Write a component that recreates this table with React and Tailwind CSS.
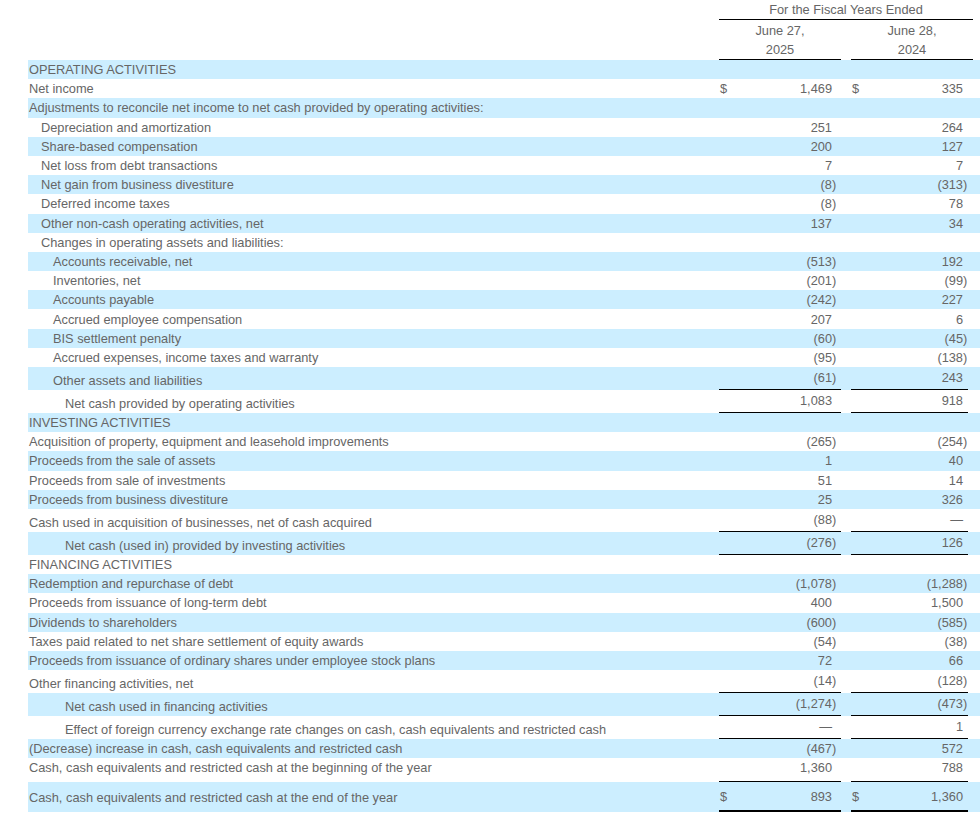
import React from 'react'

// Cash flow statement rows
// indent: 0..3, tall: row carries an underline under the figures
const ROWS = [
  { label: 'OPERATING ACTIVITIES' },
  { label: 'Net income', a: '1,469', b: '335', dollar: true },
  { label: 'Adjustments to reconcile net income to net cash provided by operating activities:' },
  { label: 'Depreciation and amortization', indent: 1, a: '251', b: '264' },
  { label: 'Share-based compensation', indent: 1, a: '200', b: '127' },
  { label: 'Net loss from debt transactions', indent: 1, a: '7', b: '7' },
  { label: 'Net gain from business divestiture', indent: 1, a: '(8)', b: '(313)' },
  { label: 'Deferred income taxes', indent: 1, a: '(8)', b: '78' },
  { label: 'Other non-cash operating activities, net', indent: 1, a: '137', b: '34' },
  { label: 'Changes in operating assets and liabilities:', indent: 1 },
  { label: 'Accounts receivable, net', indent: 2, a: '(513)', b: '192' },
  { label: 'Inventories, net', indent: 2, a: '(201)', b: '(99)' },
  { label: 'Accounts payable', indent: 2, a: '(242)', b: '227' },
  { label: 'Accrued employee compensation', indent: 2, a: '207', b: '6' },
  { label: 'BIS settlement penalty', indent: 2, a: '(60)', b: '(45)' },
  { label: 'Accrued expenses, income taxes and warranty', indent: 2, a: '(95)', b: '(138)' },
  { label: 'Other assets and liabilities', indent: 2, a: '(61)', b: '243', tall: true },
  { label: 'Net cash provided by operating activities', indent: 3, a: '1,083', b: '918', tall: true },
  { label: 'INVESTING ACTIVITIES' },
  { label: 'Acquisition of property, equipment and leasehold improvements', a: '(265)', b: '(254)' },
  { label: 'Proceeds from the sale of assets', a: '1', b: '40' },
  { label: 'Proceeds from sale of investments', a: '51', b: '14' },
  { label: 'Proceeds from business divestiture', a: '25', b: '326' },
  { label: 'Cash used in acquisition of businesses, net of cash acquired', a: '(88)', b: '—', tall: true },
  { label: 'Net cash (used in) provided by investing activities', indent: 3, a: '(276)', b: '126', tall: true },
  { label: 'FINANCING ACTIVITIES' },
  { label: 'Redemption and repurchase of debt', a: '(1,078)', b: '(1,288)' },
  { label: 'Proceeds from issuance of long-term debt', a: '400', b: '1,500' },
  { label: 'Dividends to shareholders', a: '(600)', b: '(585)' },
  { label: 'Taxes paid related to net share settlement of equity awards', a: '(54)', b: '(38)' },
  { label: 'Proceeds from issuance of ordinary shares under employee stock plans', a: '72', b: '66' },
  { label: 'Other financing activities, net', a: '(14)', b: '(128)', tall: true },
  { label: 'Net cash used in financing activities', indent: 3, a: '(1,274)', b: '(473)', tall: true },
  { label: 'Effect of foreign currency exchange rate changes on cash, cash equivalents and restricted cash', indent: 3, a: '—', b: '1', tall: true },
  { label: '(Decrease) increase in cash, cash equivalents and restricted cash', a: '(467)', b: '572' },
  { label: 'Cash, cash equivalents and restricted cash at the beginning of the year', a: '1,360', b: '788', tall: true, top: true },
  { label: 'Cash, cash equivalents and restricted cash at the end of the year', a: '893', b: '1,360', dollar: true, end: true },
]

const INDENT = ['pl-[1px]', 'pl-[13px]', 'pl-[25px]', 'pl-[37px]']

const split = (v) => {
  if (!v) return ['', '']
  if (v.endsWith(')')) return [v.slice(0, -1), ')']
  return [v, '']
}

const Row = ({ row, band }) => {
  const height = row.end
    ? 'h-[30px]'
    : row.top
    ? 'h-[24px]'
    : row.tall
    ? 'h-[23px]'
    : 'h-[19.2px]'
  const line = row.end
    ? 'border-b-2 border-black'
    : row.tall
    ? 'border-b border-black'
    : ''
  let labelAlign = 'items-center'
  let numAlign = 'items-center'
  if (row.top) {
    labelAlign = 'items-start pt-[2px]'
    numAlign = 'items-start pt-[2px]'
  } else if (row.tall) {
    labelAlign = 'items-end pb-[2px]'
    numAlign = 'items-start pt-[3px]'
  }
  const [a, pa] = split(row.a)
  const [b, pb] = split(row.b)

  return (
    <div className={`flex ${height} ${band ? 'bg-[#cceeff]' : ''}`}>
      <div className={`w-[691px] flex whitespace-nowrap ${labelAlign} ${INDENT[row.indent || 0]}`}>
        {row.label}
      </div>
      <div className={`w-[113px] flex justify-between ${numAlign} ${line}`}>
        <span className="pl-[1px]">{row.dollar ? '$' : ''}</span>
        <span>{a}</span>
      </div>
      <div className={`w-[9px] flex ${numAlign} ${line}`}>{pa}</div>
      <div className="w-[10px]" />
      <div className={`w-[112px] flex justify-between ${numAlign} ${line}`}>
        <span className="pl-[1px]">{row.dollar ? '$' : ''}</span>
        <span>{b}</span>
      </div>
      <div className={`w-[5px] flex ${numAlign} ${line}`}>{pb}</div>
      <div className="w-[5px]" />
    </div>
  )
}

export default function App() {
  return (
    <div className="w-[980px] h-[816px] bg-white overflow-hidden pl-[28px] text-[12.8px] leading-[15px] text-[#666666] font-['Liberation_Sans',Arial,sans-serif]">
      {/* Column headings */}
      <div className="flex">
        <div className="w-[691px]" />
        <div className="w-[254px] flex flex-col">
          <div className="h-[20px] flex items-center justify-center border-b border-black">
            For the Fiscal Years Ended
          </div>
          <div className="flex">
            <div className="w-[122px] h-[40px] flex flex-col items-center justify-center leading-[19px] border-b border-black">
              <span>June 27,</span>
              <span>2025</span>
            </div>
            <div className="w-[10px]" />
            <div className="w-[122px] h-[40px] flex flex-col items-center justify-center leading-[19px] border-b border-black">
              <span>June 28,</span>
              <span>2024</span>
            </div>
          </div>
        </div>
      </div>

      {ROWS.map((row, i) => (
        <Row key={i} row={row} band={i % 2 === 0} />
      ))}
    </div>
  )
}
